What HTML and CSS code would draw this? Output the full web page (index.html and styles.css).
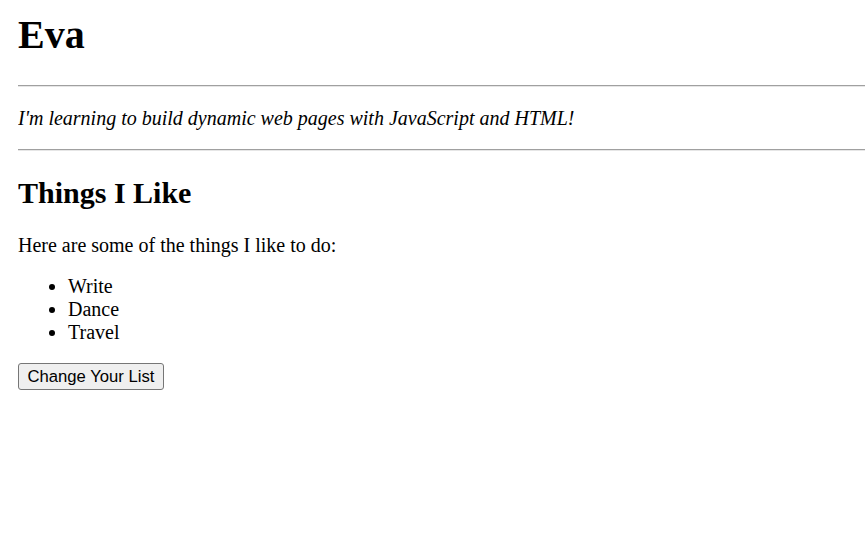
FILE: index.html
```html
<!DOCTYPE html>
<html>
<head>
<meta charset="utf-8">
<title>Eva</title>
<link rel="stylesheet" href="styles.css">
</head>
<body>
<h1 class="name">Eva</h1>
<hr class="rule">
<p class="tagline">I'm learning to build dynamic web pages with JavaScript and HTML!</p>
<hr class="rule">
<h2 class="section-title">Things I Like</h2>
<p class="intro">Here are some of the things I like to do:</p>
<ul class="likes">
  <li>Write</li>
  <li>Dance</li>
  <li>Travel</li>
</ul>
<button class="change-btn">Change Your List</button>
</body>
</html>
```

FILE: styles.css
```css
html, body {
  background: #ffffff;
}
body {
  margin: 0 0 0 18px;
  padding-top: 11px;
  font-family: "Liberation Serif", "Times New Roman", serif;
  font-size: 20px;
  color: #000;
}
.name {
  font-size: 40px;
  font-weight: bold;
  margin: 0 0 27px 0;
}
.rule {
  margin: 0;
  height: 0;
  border: none;
  border-top: 1px solid #a0a0a0;
  border-bottom: 1px solid #e6e6e6;
}
.tagline {
  font-style: italic;
  margin: 20px 0 19px 0;
}
.section-title {
  font-size: 30px;
  font-weight: bold;
  margin: 25px 0 24px 0;
}
.intro {
  margin: 0 0 18px 0;
}
.likes {
  margin: 0 0 19px 0;
  padding-left: 50px;
}
.change-btn {
  display: block;
  box-sizing: border-box;
  height: 27px;
  font-family: "Liberation Sans", Arial, sans-serif;
  font-size: 16.67px;
  line-height: 19px;
  color: #000;
  background: #efefef;
  border: 1px solid #767676;
  border-radius: 3px;
  padding: 3px 8.5px;
  margin: 0;
}
```
